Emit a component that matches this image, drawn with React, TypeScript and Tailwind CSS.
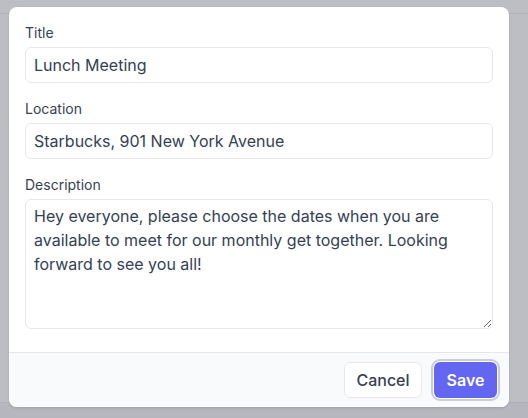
import React from 'react';

const fieldClass =
  'block w-full rounded-md border border-gray-200 bg-white px-2 text-base text-[#334155] leading-6 outline-none';

export default function App() {
  return (
    <div
      className="relative w-[528px] h-[418px] overflow-hidden bg-[#bdbec3]"
      style={{ fontFamily: 'Inter, "Noto Sans", sans-serif' }}
    >
      {/* page behind the overlay */}
      <div className="flex flex-col h-full">
        <div className="h-[14px] border-b border-[#b2b3b9]" />
        <div className="flex-1" />
        <div className="h-[16px] border-t border-[#b2b3b9] bg-[#b6b7be]" />
      </div>

      {/* Modal */}
      <div className="absolute top-[7px] left-[9px] w-[500px] h-[400px] flex flex-col rounded-lg bg-white overflow-hidden shadow-sm">
        <div className="flex-1 px-4 pt-4">
          <label className="block text-sm leading-5 text-gray-700">Title</label>
          <input className={`${fieldClass} mt-1 h-9`} defaultValue="Lunch Meeting" />

          <label className="block mt-4 text-sm leading-5 text-gray-700">Location</label>
          <input className={`${fieldClass} mt-1 h-9`} defaultValue="Starbucks, 901 New York Avenue" />

          <label className="block mt-4 text-sm leading-5 text-gray-700">Description</label>
          <textarea
            className={`${fieldClass} mt-1 h-[130px] py-[4px]`}
            defaultValue="Hey everyone, please choose the dates when you are available to meet for our monthly get together. Looking forward to see you all!"
          />
        </div>

        {/* Footer */}
        <div className="flex items-center justify-end gap-3 h-[55px] border-t border-gray-200 bg-gray-50 pr-3">
          <button className="h-9 w-[78px] rounded-md border border-gray-200 bg-white text-base font-medium text-gray-700">
            Cancel
          </button>
          <button className="h-9 w-[63px] rounded-md bg-[#6366f1] text-base font-semibold text-white ring-2 ring-[#c9cddb] ring-offset-1">
            Save
          </button>
        </div>
      </div>
    </div>
  );
}
